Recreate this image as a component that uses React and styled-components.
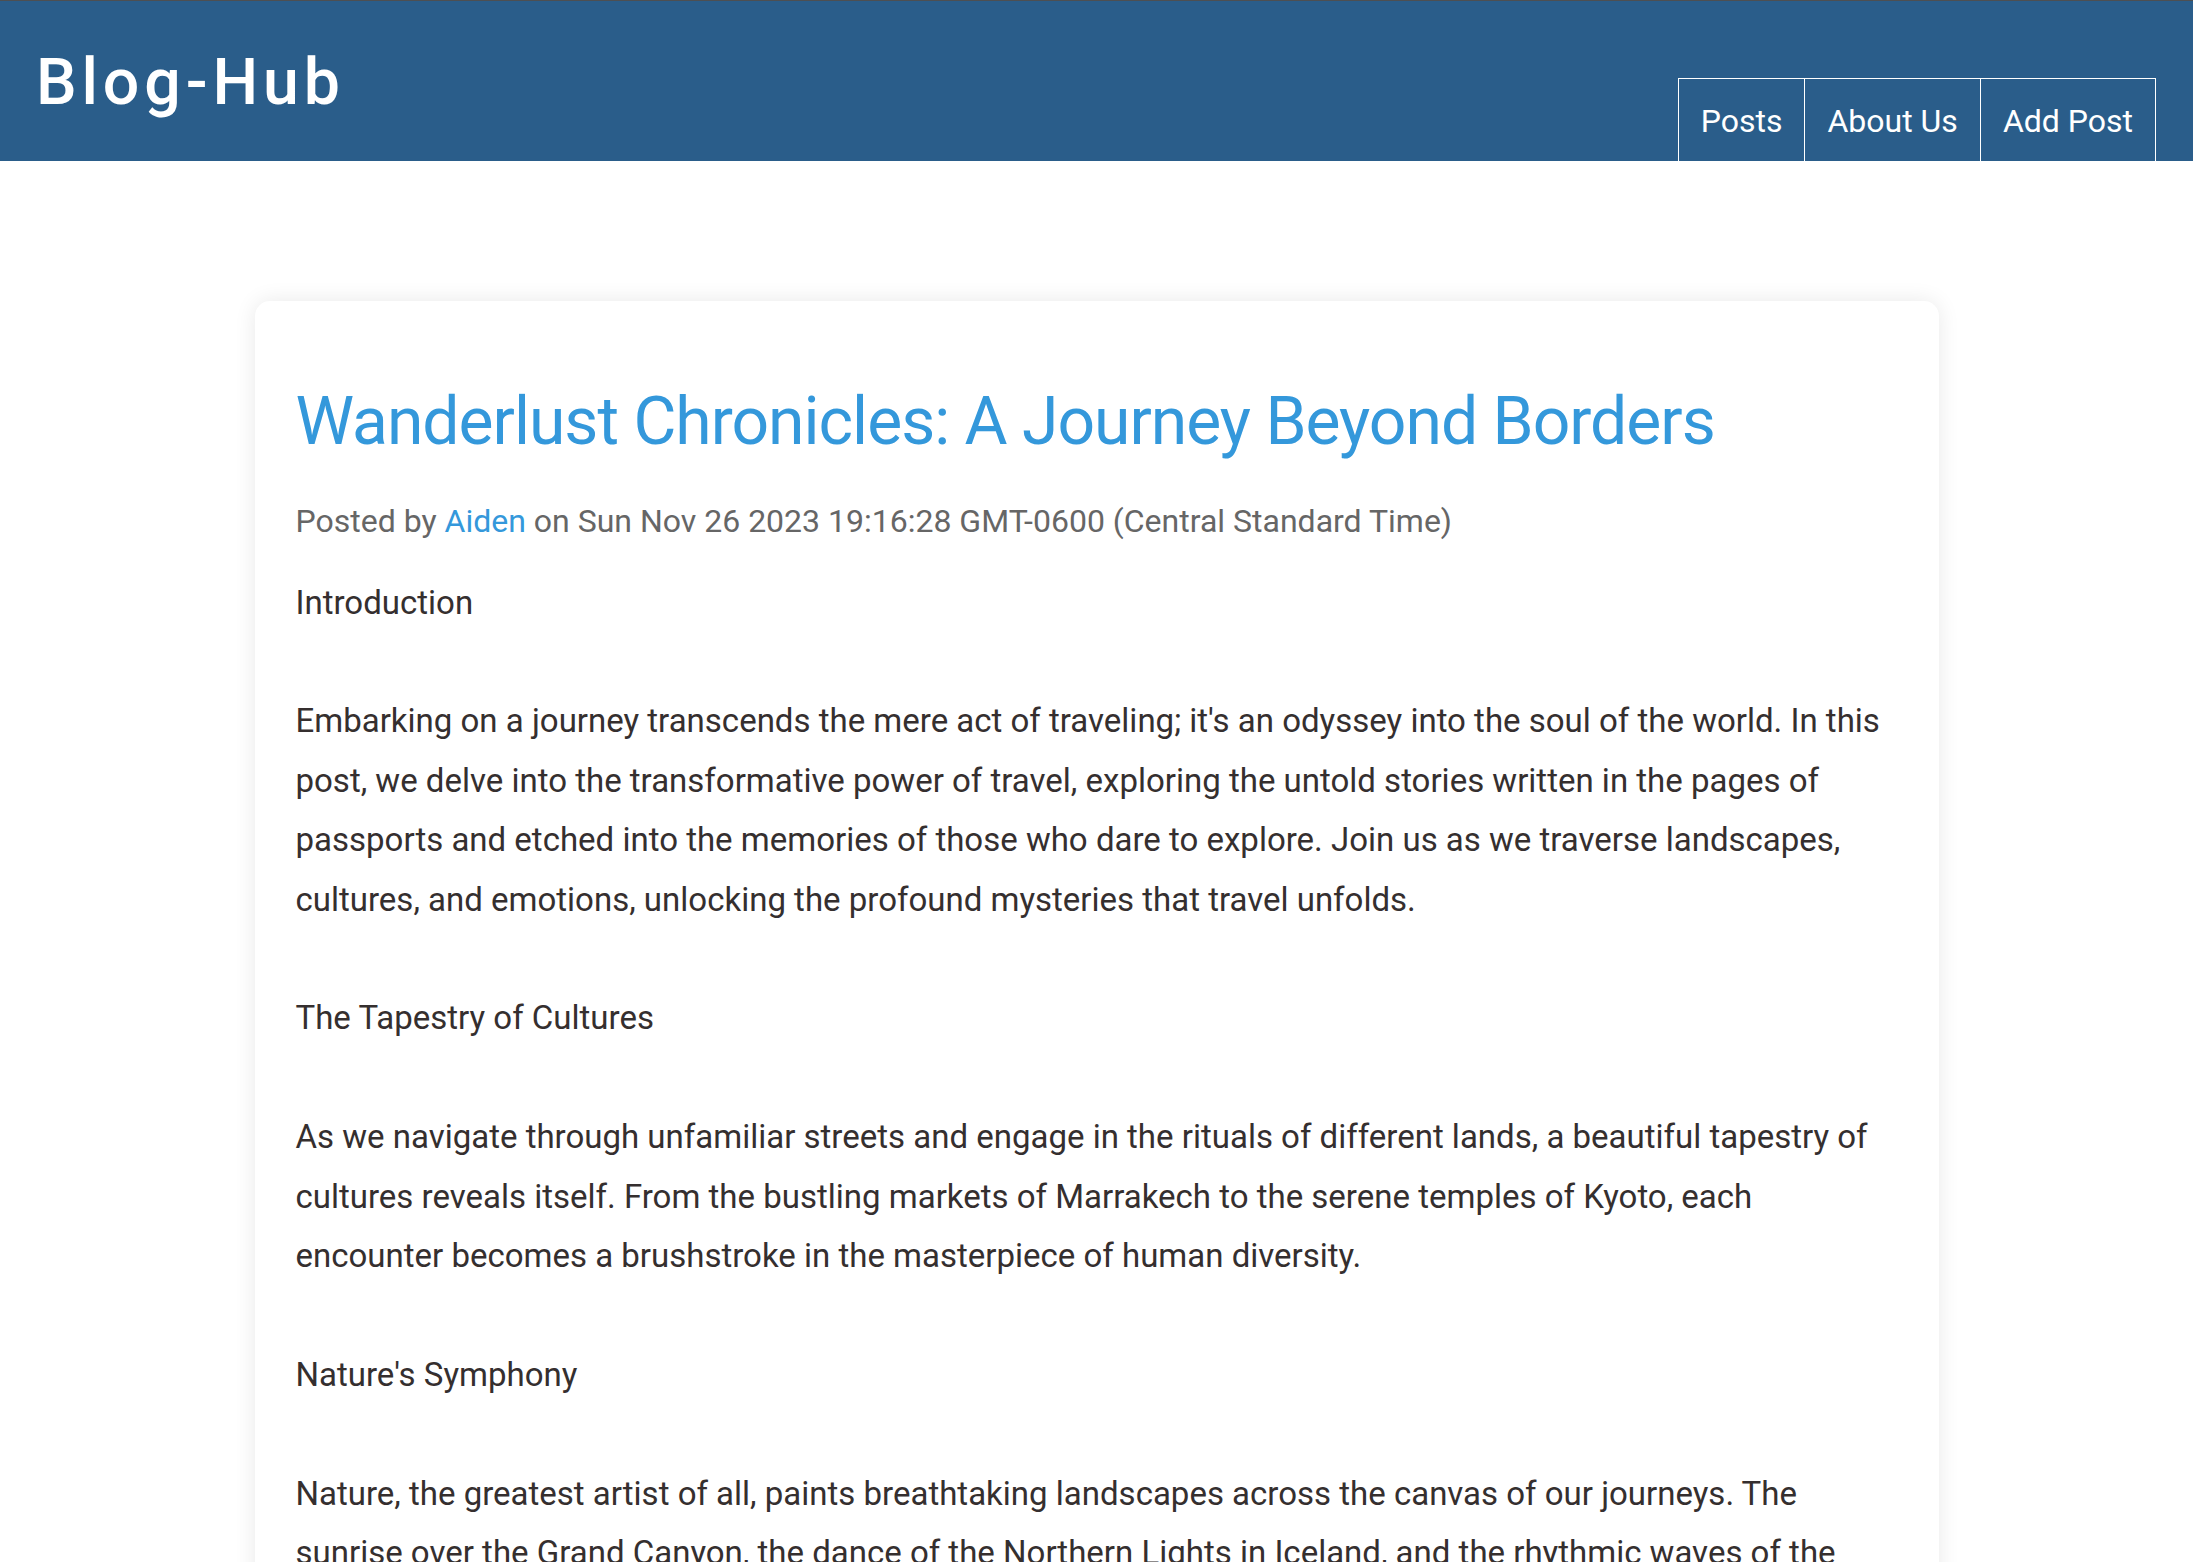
import React from "react";
import styled, { createGlobalStyle } from "styled-components";

const Global = createGlobalStyle`
  html, body { margin: 0; padding: 0; background: #ffffff; }
  body { font-family: Roboto, "Liberation Sans", Arial, sans-serif; }
  * { box-sizing: border-box; }
`;

const Header = styled.header`
  display: flex;
  justify-content: space-between;
  align-items: stretch;
  height: 161px;
  background: #2a5d8a;
  border-top: 1px solid #4d4f52;
  padding: 0 37px 0 36px;
`;

const Logo = styled.h1`
  margin: 0;
  align-self: center;
  color: #ffffff;
  font-family: Roboto, "Liberation Sans", sans-serif;
  font-weight: 500;
  font-size: 64.4px;
  letter-spacing: 4.9px;
  line-height: 1;
  padding-top: 2px;
`;

const Nav = styled.nav`
  display: flex;
  align-self: flex-end;
  height: 83px;
  border: 1.4px solid #ffffff;
  border-bottom: none;
`;

const NavItem = styled.a`
  display: flex;
  align-items: center;
  padding: 1px 22px 0;
  color: #ffffff;
  font-size: 32px;
  text-decoration: none;
  & + & { border-left: 1.4px solid #ffffff; }
`;

const Main = styled.main`
  padding: 140px 0 60px;
`;

const Card = styled.article`
  width: 1684px;
  margin: 0 auto;
  background: #ffffff;
  border-radius: 15px;
  box-shadow: 0 0 22px rgba(0, 0, 0, 0.09);
  padding: 81.5px 41px 60px;
`;

const Title = styled.h2`
  margin: 0 0 42.4px;
  color: #3498db;
  font-weight: 400;
  font-size: 66px;
  letter-spacing: -1px;
  line-height: 1.19;
`;

const Meta = styled.p`
  margin: 0 0 33.2px;
  color: #666666;
  font-size: 32px;
  line-height: 36px;
`;

const Author = styled.span`
  color: #3498db;
`;

const Body = styled.div`
  white-space: pre-wrap;
  color: #352f2f;
  font-size: 33px;
  line-height: 59.4px;
`;

const content = `Introduction

Embarking on a journey transcends the mere act of traveling; it's an odyssey into the soul of the world. In this post, we delve into the transformative power of travel, exploring the untold stories written in the pages of passports and etched into the memories of those who dare to explore. Join us as we traverse landscapes, cultures, and emotions, unlocking the profound mysteries that travel unfolds.

The Tapestry of Cultures

As we navigate through unfamiliar streets and engage in the rituals of different lands, a beautiful tapestry of cultures reveals itself. From the bustling markets of Marrakech to the serene temples of Kyoto, each encounter becomes a brushstroke in the masterpiece of human diversity.

Nature's Symphony

Nature, the greatest artist of all, paints breathtaking landscapes across the canvas of our journeys. The sunrise over the Grand Canyon, the dance of the Northern Lights in Iceland, and the rhythmic waves of the Maldives compose a symphony that resonates within the traveler's heart.`;

export default function App() {
  return (
    <>
      <Global />
      <Header>
        <Logo>Blog-Hub</Logo>
        <Nav>
          <NavItem href="#">Posts</NavItem>
          <NavItem href="#">About Us</NavItem>
          <NavItem href="#">Add Post</NavItem>
        </Nav>
      </Header>
      <Main>
        <Card>
          <Title>Wanderlust Chronicles: A Journey Beyond Borders</Title>
          <Meta>
            Posted by <Author>Aiden</Author> on Sun Nov 26 2023 19:16:28 GMT-0600 (Central Standard Time)
          </Meta>
          <Body>{content}</Body>
        </Card>
      </Main>
    </>
  );
}
